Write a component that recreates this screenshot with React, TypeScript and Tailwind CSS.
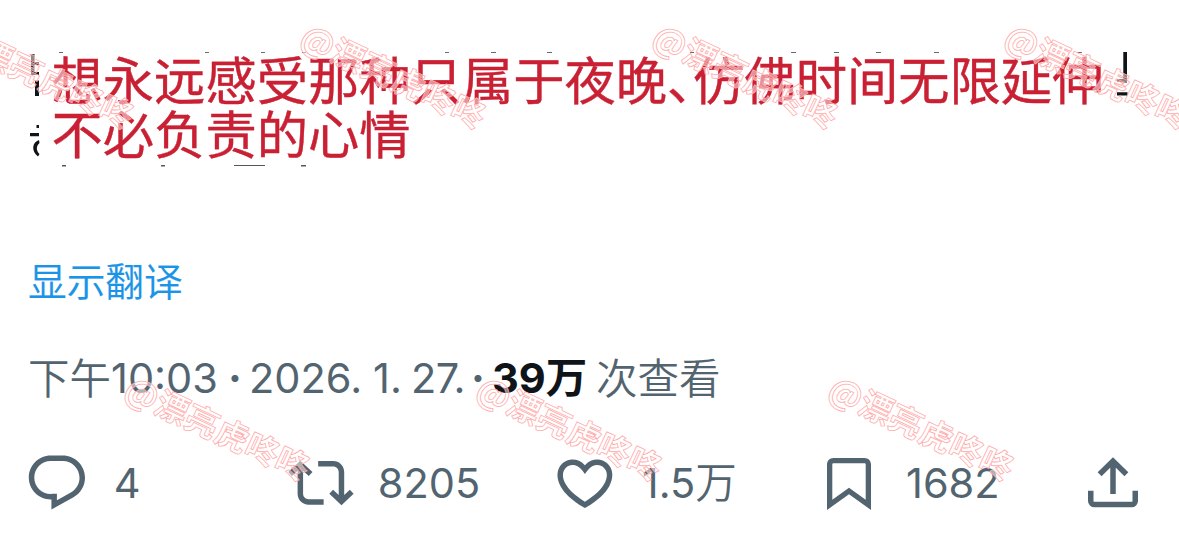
import type { ReactNode } from "react";

interface Stat {
  label: string;
  icon: ReactNode;
  box: string;
  value: string;
}

const cjk = "font-['Noto_Sans_CJK_SC',sans-serif]";
const cjkLight = "-mt-[4px] font-['Noto_Sans_CJK_SC',sans-serif] [font-weight:350]";

const ReplyIcon = () => (
  <svg viewBox="0 0 24 24" className="size-[65.8px] fill-current">
    <path d="M1.751 10c0-4.42 3.584-8 8.005-8h4.366c4.49 0 8.129 3.64 8.129 8.13 0 2.96-1.607 5.68-4.196 7.11l-8.054 4.46v-3.69h-.067c-4.49.1-8.183-3.51-8.183-8.01zm8.005-6c-3.317 0-6.005 2.69-6.005 6 0 3.37 2.77 6.08 6.138 6.01l.351-.01h1.761v2.3l5.087-2.81c1.951-1.08 3.163-3.13 3.163-5.36 0-3.39-2.744-6.13-6.129-6.13H9.756z" />
  </svg>
);

const RepostIcon = () => (
  <svg viewBox="0 0 24 24" className="size-[65.8px] fill-current">
    <path d="M4.5 3.88l4.432 4.14-1.364 1.46L5.5 7.55V16c0 1.1.896 2 2 2H13v2H7.5c-2.209 0-4-1.79-4-4V7.55L1.432 9.48.068 8.02 4.5 3.88zM16.5 6H11V4h5.5c2.209 0 4 1.79 4 4v8.45l2.068-1.93 1.364 1.46-4.432 4.14-4.432-4.14 1.364-1.46 2.068 1.93V8c0-1.1-.896-2-2-2z" />
  </svg>
);

const LikeIcon = () => (
  <svg viewBox="0 0 24 24" className="size-[65.8px] fill-current">
    <path d="M16.697 5.5c-1.222-.06-2.679.51-3.89 2.16l-.805 1.09-.806-1.09C9.984 6.01 8.526 5.44 7.304 5.5c-1.243.07-2.349.78-2.91 1.91-.552 1.12-.633 2.78.479 4.82 1.074 1.97 3.257 4.27 7.129 6.61 3.87-2.34 6.052-4.64 7.126-6.61 1.111-2.04 1.03-3.7.477-4.82-.561-1.13-1.666-1.84-2.908-1.91zm4.187 7.69c-1.351 2.48-4.001 5.12-8.379 7.67l-.503.3-.504-.3c-4.379-2.55-7.029-5.19-8.382-7.67-1.36-2.5-1.41-4.86-.514-6.67.887-1.79 2.647-2.91 4.601-3.01 1.651-.09 3.368.56 4.798 2.01 1.429-1.45 3.146-2.1 4.796-2.01 1.954.1 3.714 1.22 4.601 3.01.896 1.81.846 4.17-.514 6.67z" />
  </svg>
);

const BookmarkIcon = () => (
  <svg viewBox="0 0 44 52" className="mt-[8.3px] h-[52px] w-[44px] fill-current">
    <path
      fillRule="evenodd"
      d="M0 6.5C0 2.8 2.8 0 6.5 0h31C41.2 0 44 2.8 44 6.5V52L22 36.2 0 52zM6.5 5.3c-.7 0-1.2.5-1.2 1.2v35.2L22 29.8l16.7 11.9V6.5c0-.7-.5-1.2-1.2-1.2z"
    />
  </svg>
);

const ShareIcon = () => (
  <svg viewBox="0 0 50 51" className="mt-[7.3px] h-[51px] w-[50px] fill-none stroke-current stroke-[5.5]">
    <path d="M25 4v33M11.6 17.3 25 4l13.4 13.3M2.75 33.7v10.2a3.7 3.7 0 0 0 3.7 3.7h37.1a3.7 3.7 0 0 0 3.7-3.7V33.7" />
  </svg>
);

const stats: Stat[] = [
  { label: "reply", icon: <ReplyIcon />, box: "w-[264px] gap-[24px]", value: "4" },
  { label: "repost", icon: <RepostIcon />, box: "w-[264px] gap-[24px]", value: "8205" },
  { label: "like", icon: <LikeIcon />, box: "w-[275px] gap-[24px]", value: "1.5" },
  { label: "bookmark", icon: <BookmarkIcon />, box: "w-[261px] gap-[35px]", value: "1682" },
];

const watermarks = [
  "left-[-108px] top-[50px]",
  "left-[244px] top-[50px]",
  "left-[596px] top-[50px]",
  "left-[948px] top-[50px]",
  "left-[68px] top-[402px]",
  "left-[420px] top-[402px]",
  "left-[772px] top-[402px]",
];

// Edges of the original lettering that show round the caption box
const Remnants = () => (
  <svg viewBox="0 0 1179 180" className="absolute left-0 top-0 h-[180px] w-[1179px] fill-[#0f1419]">
    <path d="M31 54h3.5v21H31zM34.5 62h4.5v3h-4.5zM34.5 72h4.5v3h-4.5zM35 80.5h4V96h-4z" />
    <path d="M36.5 125h2.5v3h-2.5zM30 133h9v3.3h-9zM39 140c-7 2.5-8 11-1 16.5l1.5-2.5c-3.5-3.5-3.5-8 0-11z" />
    <path d="M1123.3 52h3.7v31h-3.7zM1117 79h10v3h-10zM1117 92.3h10.5v3.2H1117z" />
    <path
      className="fill-[#666a6d]"
      d="M59 52h4v1h-4zM205 52h4v1h-4zM261 52h4v1h-4zM302 52h4v1h-4zM445 52h4v1h-4zM491 52h5v1h-5zM547 52h5v1h-5zM690 52h4v1h-4zM791 52h5v1h-5zM834 52h5v1h-5zM876 52h5v1h-5zM934 52h5v1h-5zM1077 52h5v1h-5z"
    />
    <path className="fill-[#54585b]" d="M62 165h4v1.5h-4zM161 165h4v1.5h-4zM234 165h31v1h-31zM301 165h5v1.5h-5z" />
  </svg>
);

const App = () => (
  <div className={`relative h-[551px] w-[1179px] overflow-hidden bg-white text-[#536471] ${cjk}`}>
    <Remnants />
    <div className="relative h-[161px] pl-[51.5px] pt-[50.5px] text-[51.3px] leading-[54.5px] text-[#c92034] [-webkit-text-stroke:0.4px_#c92034]">
      <p className="whitespace-nowrap">
        想永远感受那种只属于夜晚<span className="inline-block w-[26px]">、</span>仿佛时间无限延伸
      </p>
      <p>不必负责的心情</p>
    </div>

    <div className="mt-[88px] h-[60px] pl-[28px] text-[38.7px] leading-[60px] text-[#1a94e6] [-webkit-text-stroke:0.2px_#1a94e6] [font-weight:350]">
      显示翻译
    </div>

    <div className="mt-[39px] flex h-[60px] items-center whitespace-nowrap pl-[28px] font-['Inter','Noto_Sans_CJK_SC',sans-serif] text-[41.5px] leading-[60px]">
      <span className={`w-[83px] ${cjkLight}`}>下午</span>
      <span className="w-[117px]">10:03</span>
      <span className="w-[21px] font-bold">·</span>
      <span className="w-[124px]">2026.</span>
      <span className="w-[38px]">1.</span>
      <span className="w-[60px] tracking-[-0.5px]">27.</span>
      <span className="w-[21px] font-bold">·</span>
      <span className="w-[104px] font-bold text-[#0f1419]">39万</span>
      <span className={cjkLight}>次查看</span>
    </div>

    <div className="mt-[42px] flex h-[66px] items-start pl-[24px]">
      {stats.map((stat) => (
        <div key={stat.label} className={`flex shrink-0 ${stat.box}`}>
          {stat.icon}
          <span className="font-['Inter','Noto_Sans_CJK_SC',sans-serif] text-[41.5px] leading-[67px]">
            {stat.value}
            {stat.label === "like" && <span className="[font-weight:350]">万</span>}
          </span>
        </div>
      ))}
      <ShareIcon />
    </div>

    {watermarks.map((place) => (
      <div
        key={place}
        className={`absolute flex h-[50px] w-[300px] rotate-[25deg] items-center justify-center whitespace-nowrap text-[33.2px] font-bold text-white/50 [-webkit-text-stroke:0.8px_#ffabab] ${place}`}
      >
        @漂亮虎咚咚
      </div>
    ))}
  </div>
);

export default App;
